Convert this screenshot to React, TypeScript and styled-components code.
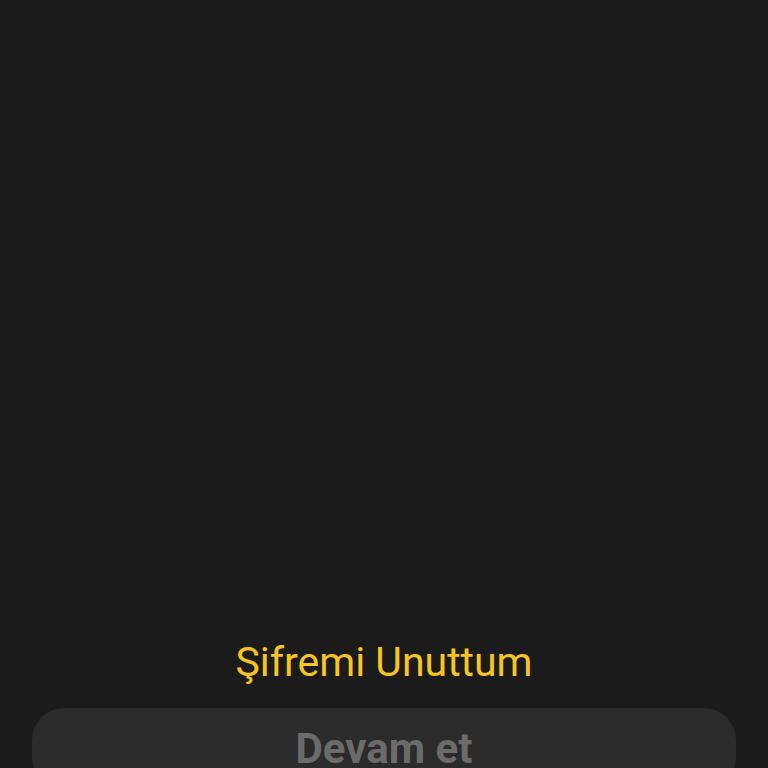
import React from "react";
import styled, { createGlobalStyle } from "styled-components";

const GlobalStyle = createGlobalStyle`
  html, body {
    margin: 0;
    padding: 0;
    background: #1b1b1b;
    overflow: hidden;
  }
`;

const App = () => {
  return (
    <>
      <GlobalStyle />
      <Screen>
        <Spacer />
        <ForgotLink>Şifremi Unuttum</ForgotLink>
        <ContinueButton disabled>Devam et</ContinueButton>
      </Screen>
    </>
  );
};

export default App;

const Screen = styled.div`
  height: calc(100vh + 20px);
  display: flex;
  flex-direction: column;
  align-items: center;
  padding: 0 32px;
  box-sizing: border-box;
  background-color: #1b1b1b;
  font-family: Roboto, "Noto Sans", sans-serif;
`;
const Spacer = styled.div`
  flex: 1;
`;
const ForgotLink = styled.div`
  color: #f7c51e;
  font-size: 41px;
  line-height: 48px;
  margin-bottom: 22px;
  cursor: pointer;
`;
const ContinueButton = styled.button`
  width: 100%;
  height: 80px;
  flex-shrink: 0;
  border: none;
  outline: none;
  border-radius: 32px;
  background-color: #2b2b2b;
  color: #6b6b6b;
  font-family: Roboto, "Noto Sans", sans-serif;
  font-weight: 700;
  font-size: 42px;
  padding: 0;
`;
